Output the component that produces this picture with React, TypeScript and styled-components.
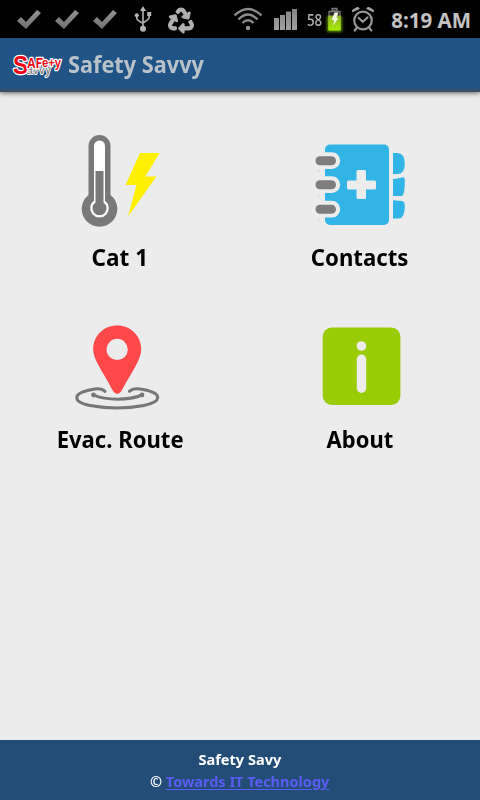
import React from 'react';
import styled, { createGlobalStyle } from 'styled-components';
import { FaRecycle } from 'react-icons/fa';

const GlobalStyle = createGlobalStyle`
  * { box-sizing: border-box; }
  body { margin: 0; background: #ececec; }
`;

const Screen = styled.div`
  width: 480px;
  height: 800px;
  display: flex;
  flex-direction: column;
  background: #ececec;
  overflow: hidden;
  font-family: 'Noto Sans', 'Open Sans', sans-serif;
  font-weight: 700;
`;

const StatusBar = styled.div`
  height: 38px;
  flex: none;
  display: flex;
  align-items: center;
  justify-content: space-between;
  padding: 0 9px 0 16px;
  background: #000;
`;

const StatusGroup = styled.div`
  display: flex;
  align-items: center;
  height: 38px;
`;

const StatusIcon = styled.svg<{ $gap?: number }>`
  display: block;
  flex: none;
  margin-right: ${(p) => p.$gap ?? 0}px;
`;

const RecycleIcon = styled(FaRecycle)`
  color: #b0b0b0;
  width: 26px;
  height: 25px;
  margin-top: 2px;
  overflow: visible;

  path {
    stroke-width: 22px;
  }
`;

const Text = styled.span<{ $size: number; $color: string; $scale?: number; $spacing?: number }>`
  display: block;
  white-space: nowrap;
  line-height: 1;
  font-size: ${(p) => p.$size}px;
  color: ${(p) => p.$color};
  letter-spacing: ${(p) => p.$spacing ?? 0}px;
  transform: scaleX(${(p) => p.$scale ?? 1});
`;

const BatteryLevel = styled(Text)`
  width: 15px;
  margin: 1px 4px 0 0;
  font-family: 'Open Sans', sans-serif;
  font-weight: 600;
  transform-origin: left center;
`;

const Clock = styled(Text)`
  margin-top: 2px;
  transform-origin: right center;
`;

const Header = styled.header`
  height: 54px;
  flex: none;
  display: flex;
  align-items: center;
  padding: 0 12px;
  background: #205386;
  border-bottom: 3px solid #3a4f68;
  box-shadow: 0 1px 5px rgba(0, 0, 0, 0.6);
`;

const Logo = styled.svg`
  display: block;
  flex: none;
  margin-right: 6px;
  overflow: visible;
`;

const Title = styled(Text)`
  transform-origin: left center;
`;

const Menu = styled.main`
  flex: 1;
  display: grid;
  grid-template-columns: 240px 240px;
  grid-auto-rows: 182px;
  padding-top: 38px;
`;

const MenuItem = styled.div`
  display: flex;
  flex-direction: column;
  align-items: center;
`;

const MenuIcon = styled.svg`
  display: block;
  width: 100px;
  height: 100px;
  margin-bottom: 16px;
  flex: none;
`;

const Footer = styled.footer`
  height: 60px;
  flex: none;
  display: flex;
  flex-direction: column;
  align-items: center;
  gap: 8px;
  padding-top: 13px;
  background: #234d76;
`;

const Link = styled.a`
  color: #5b5bf6;
  text-decoration: underline;
  text-decoration-thickness: 1px;
  text-underline-offset: 2px;
`;

const Check = () => (
  <StatusIcon width="26" height="22" viewBox="0 0 26 22" $gap={12}>
    <defs>
      <linearGradient id="check" x1="0" y1="0" x2="0" y2="1">
        <stop offset="0" stopColor="#939393" />
        <stop offset="1" stopColor="#707070" />
      </linearGradient>
    </defs>
    <path d="M1 13 5 9 10 14 21 2 25 5 10 21Z" fill="url(#check)" />
  </StatusIcon>
);

const Usb = () => (
  <StatusIcon width="26" height="26" viewBox="-4 0 26 26" $gap={12}>
    <g fill="none" stroke="#aaa" strokeWidth="1.7">
      <path d="M9 4V22M2.8 9V12Q2.8 14 5 15L9 17.2M15.2 8V11Q15.2 13 13 14.2L9 17" />
    </g>
    <g fill="#b4b4b4">
      <path d="M9 0 12 5H6Z" />
      <circle cx="9" cy="22.8" r="3" />
      <circle cx="2.8" cy="9.3" r="2" />
      <path d="M13.2 6H17.2V10H13.2Z" />
    </g>
  </StatusIcon>
);

const Wifi = () => (
  <StatusIcon width="30" height="24" viewBox="0 0 30 24" $gap={11}>
    <g fill="none" stroke="#8c8c8c" strokeWidth="2.3">
      <path d="M1.5 8.5Q15-4.5 28.5 8.5M5.5 12.5Q15 2.5 24.5 12.5M9.5 16Q15 10.5 20.5 16" />
    </g>
    <circle cx="15" cy="21" r="2.2" fill="#999" />
  </StatusIcon>
);

const Signal = () => (
  <StatusIcon width="24" height="22" viewBox="0 0 24 22" $gap={9}>
    <defs>
      <linearGradient id="bars" x1="0" y1="0" x2="0" y2="1">
        <stop offset="0" stopColor="#858585" />
        <stop offset="1" stopColor="#a0a0a0" />
      </linearGradient>
    </defs>
    <path
      d="M0 10H5V22H0ZM6 7H11V22H6ZM12 3.5H17V22H12ZM18 1H23V22H18Z"
      fill="url(#bars)"
    />
  </StatusIcon>
);

const Battery = () => (
  <StatusIcon width="18" height="28" viewBox="0 -2 18 28" overflow="visible" $gap={7}>
    <defs>
      <linearGradient id="charge" x1="0" y1="0" x2="0" y2="1">
        <stop offset="0" stopColor="#91b52e" />
        <stop offset="1" stopColor="#a8ea00" />
      </linearGradient>
      <filter id="glow" x="-50%" y="-50%" width="200%" height="200%">
        <feGaussianBlur stdDeviation="1.6" />
      </filter>
    </defs>
    <path d="M1 9H16V25H1Z" fill="#74b000" opacity=".8" filter="url(#glow)" />
    <path d="M3 4.5H14V10H3ZM6 1.5H11V4H6Z" fill="#252525" stroke="#777" strokeWidth="1.3" />
    <rect x="2.2" y="8.5" width="12.6" height="15" rx="1" fill="url(#charge)" />
    <path d="M8.5 5.5H12.5L10.3 11H12.5L7 18.5 8.3 13H5.7Z" fill="#f5fbe4" />
  </StatusIcon>
);

const Alarm = () => (
  <StatusIcon width="24" height="26" viewBox="0 0 24 26" $gap={16}>
    <g fill="none" stroke="#969696" strokeWidth="2.2">
      <circle cx="12" cy="14.5" r="8.8" />
      <path d="M7.8 12 11.8 15.8 16.5 11.5M6 21.5 3.7 24.5M18 21.5 20.3 24.5" strokeLinecap="round" />
    </g>
    <path
      d="M1.5 6.3Q0 4.5 2.5 3L5.5 1.3Q8 .2 8.8 3ZM22.5 6.3Q24 4.5 21.5 3L18.5 1.3Q16 .2 15.2 3Z"
      fill="#a2a2a2"
    />
  </StatusIcon>
);

const SafetyLogo = () => (
  <Logo width="50" height="28" viewBox="0 0 50 28" fontFamily="Liberation Sans, sans-serif" fontWeight="700">
    <g fill="#777" stroke="#fff" strokeWidth="2" paintOrder="stroke" strokeLinejoin="round">
      <text x="14" y="24" fontSize="14" fontWeight="400" textLength="25" lengthAdjust="spacingAndGlyphs">avvy</text>
    </g>
    <g fill="#ee0616" stroke="#fff" strokeWidth="2.6" paintOrder="stroke" strokeLinejoin="round">
      <text x="1" y="23.5" fontSize="26" textLength="15" lengthAdjust="spacingAndGlyphs">S</text>
      <text x="15" y="17.8" fontSize="14.5" textLength="16" lengthAdjust="spacingAndGlyphs">AF</text>
      <text x="30" y="17.2" fontSize="13" textLength="19" lengthAdjust="spacingAndGlyphs">e+y</text>
    </g>
  </Logo>
);

const Thermometer = () => (
  <MenuIcon viewBox="0 0 100 100">
    <path
      d="M18.5 16A11 11 0 0 1 40.5 16V65A17.8 17.8 0 1 1 18.5 65Z"
      fill="#797979"
    />
    <path
      d="M24 16A5.5 5.5 0 0 1 35 16V70.8A9.3 9.3 0 1 1 24 70.8Z"
      fill="#fff"
    />
    <path d="M25.5 41H33.5V72.5A7 7 0 1 1 25.5 72.5Z" fill="#797979" />
    <path d="M70 23H89.5L75.5 46.5H86.5L58 86.5 66.5 55H55.5Z" fill="#fff000" />
  </MenuIcon>
);

const Contacts = () => (
  <MenuIcon viewBox="0 0 100 100">
    <rect x="15" y="14.5" width="64" height="80.5" rx="5" fill="#33b4e6" />
    <g fill="#ececec">
      <path d="M4 22.2H21.8A8.4 8.4 0 0 1 21.8 39H4ZM4 46.2H21.8A8.4 8.4 0 0 1 21.8 63H4ZM4 70.8H21.8A8.4 8.4 0 0 1 21.8 87.6H4Z" />
      <path d="M48 40H54.5Q56 40 56 41.5V50.5H64.5Q66 50.5 66 52V58Q66 59.5 64.5 59.5H56V67.5Q56 69 54.5 69H48Q46.5 69 46.5 67.5V59.5H38.5Q37 59.5 37 58V52Q37 50.5 38.5 50.5H46.5V41.5Q46.5 40 48 40Z" />
    </g>
    <g fill="#7d7d7d">
      <rect x="5.5" y="26.3" width="20.5" height="9" rx="4.5" />
      <rect x="5.5" y="50.2" width="20.5" height="9" rx="4.5" />
      <rect x="5.5" y="74.7" width="20.5" height="9" rx="4.5" />
    </g>
    <g fill="#33b4e6">
      <path d="M83 23H88Q94.8 23.5 94.8 34Q94.8 43.5 88 44H83ZM83 49Q87 49 93 47.3Q94.8 47 94.8 50Q94.8 66 91.5 66H83ZM83 70.2 92 71Q94.8 71.5 94.8 76Q94.8 88 89 88.5H83Z" />
    </g>
    <g fill="#d5d5d5">
      <circle cx="8.5" cy="40.8" r="1" />
      <circle cx="8.5" cy="65.4" r="1" />
      <circle cx="8.5" cy="89.4" r="1" />
    </g>
  </MenuIcon>
);

const Route = () => (
  <MenuIcon viewBox="0 0 100 100">
    <g fill="none" stroke="#777" strokeLinecap="round">
      <path
        d="M35 79.3Q31 75.5 22 77.5C1 81.5 3 90 20 93.5Q47 98.5 74 93.5C91 90 94 81.5 73 77.5Q63 75.5 59.5 79.3"
        strokeWidth="3"
      />
      <path d="M23.5 83Q33 87.2 47.5 87.2Q62 87.2 72 83" strokeWidth="3" />
    </g>
    <circle cx="23.5" cy="83" r="2.4" fill="#777" />
    <circle cx="72" cy="83" r="2.4" fill="#777" />
    <path
      d="M47.2 13.5C60.8 13.5 71.2 24 71.2 37.2C71.2 48 61 61 51 79.8Q47.3 84 43.5 79.8C34 61 23.2 48 23.2 37.2C23.2 24 33.6 13.5 47.2 13.5Z"
      fill="#ff4849"
    />
    <circle cx="47.2" cy="37.4" r="10.6" fill="#ececec" />
  </MenuIcon>
);

const About = () => (
  <MenuIcon viewBox="0 0 100 100">
    <rect x="12.7" y="15.5" width="77.7" height="77.5" rx="9" fill="#99cc05" />
    <circle cx="51.4" cy="34" r="4.8" fill="#ececec" />
    <rect x="46.8" y="42.5" width="9.4" height="38.5" rx="4.7" fill="#ececec" />
  </MenuIcon>
);

const items = [
  { label: 'Cat 1', Icon: Thermometer, scale: 0.98 },
  { label: 'Contacts', Icon: Contacts, scale: 0.965 },
  { label: 'Evac. Route', Icon: Route, scale: 0.96 },
  { label: 'About', Icon: About, scale: 0.955 },
];

export default function App() {
  return (
    <Screen>
      <GlobalStyle />
      <StatusBar>
        <StatusGroup>
          <Check />
          <Check />
          <Check />
          <Usb />
          <RecycleIcon />
        </StatusGroup>
        <StatusGroup>
          <Wifi />
          <Signal />
          <BatteryLevel $size={16} $color="#aaa" $scale={0.83}>58</BatteryLevel>
          <Battery />
          <Alarm />
          <Clock $size={20.5} $color="#c3c3c3">8:19 AM</Clock>
        </StatusGroup>
      </StatusBar>
      <Header>
        <SafetyLogo />
        <Title $size={24} $color="#b9c1c9" $scale={0.905}>Safety Savvy</Title>
      </Header>
      <Menu>
        {items.map(({ label, Icon, scale }) => (
          <MenuItem key={label}>
            <Icon />
            <Text $size={23} $color="#000" $scale={scale}>{label}</Text>
          </MenuItem>
        ))}
      </Menu>
      <Footer>
        <Text $size={14} $color="#fff" $scale={1.04}>Safety Savy</Text>
        <Text $size={14} $color="#fff" $scale={1.035}>
          © <Link>Towards IT Technology</Link>
        </Text>
      </Footer>
    </Screen>
  );
}
